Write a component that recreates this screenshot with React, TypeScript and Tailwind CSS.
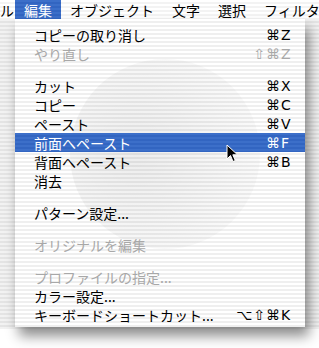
const font = "font-['Noto_Sans_CJK_JP','Noto_Sans',sans-serif]";
const keyFont = "font-['DejaVu_Sans','Liberation_Sans',sans-serif]";

type Item =
  | { kind: 'sep' }
  | { kind: 'item'; label: string; mods?: string; k?: string; disabled?: boolean; active?: boolean };

const items: Item[] = [
  { kind: 'item', label: 'コピーの取り消し', mods: '⌘', k: 'Z' },
  { kind: 'item', label: 'やり直し', mods: '⇧⌘', k: 'Z', disabled: true },
  { kind: 'sep' },
  { kind: 'item', label: 'カット', mods: '⌘', k: 'X' },
  { kind: 'item', label: 'コピー', mods: '⌘', k: 'C' },
  { kind: 'item', label: 'ペースト', mods: '⌘', k: 'V' },
  { kind: 'item', label: '前面へペースト', mods: '⌘', k: 'F', active: true },
  { kind: 'item', label: '背面へペースト', mods: '⌘', k: 'B' },
  { kind: 'item', label: '消去' },
  { kind: 'sep' },
  { kind: 'item', label: 'パターン設定...' },
  { kind: 'sep' },
  { kind: 'item', label: 'オリジナルを編集', disabled: true },
  { kind: 'sep' },
  { kind: 'item', label: 'プロファイルの指定...', disabled: true },
  { kind: 'item', label: 'カラー設定...' },
  { kind: 'item', label: 'キーボードショートカット...', mods: '⌥⇧⌘', k: 'K' },
];

function Row({ item }: { item: Extract<Item, { kind: 'item' }> }) {
  const color = item.active ? 'text-white' : item.disabled ? 'text-[#a8a8a8]' : 'text-black';
  return (
    <div
      className={`relative z-10 h-[19px] flex items-center justify-between pl-[19px] pr-[13px] ${color} ${
        item.active
          ? 'bg-[repeating-linear-gradient(to_bottom,#3c6fc9_0px,#3c6fc9_2px,#3265c1_2px,#3265c1_4px)]'
          : ''
      }`}
    >
      <span className="text-[14px] leading-none whitespace-nowrap">{item.label}</span>
      {item.k && (
        <span className={`flex items-center leading-none ${keyFont}`}>
          <span className="text-[14px] tracking-[1px]">{item.mods}</span>
          <span className="text-[14px] w-[11px]">{item.k}</span>
        </span>
      )}
    </div>
  );
}

function Cursor() {
  return (
    <svg className="absolute left-[226px] top-[144px] z-20" width="14" height="20" viewBox="0 0 14 20">
      <path d="M1 1 L1 15 L4.5 11.5 L7 17.5 L9.3 16.5 L6.8 10.8 L11.5 10.8 Z" fill="#000" stroke="#fff" strokeWidth="1" />
    </svg>
  );
}

export default function App() {
  const bar = ['編集', 'オブジェクト', '文字', '選択', 'フィルタ'];
  return (
    <div className={`relative w-[319px] h-[348px] overflow-hidden bg-white ${font}`}>
      {/* menu bar */}
      <div className="h-[19px] flex items-center bg-[repeating-linear-gradient(to_bottom,#ffffff_0px,#ffffff_2px,#f3f3f3_2px,#f3f3f3_4px)] text-[14px] leading-none text-black whitespace-nowrap">
        <div className="w-[15px] shrink-0 h-full flex items-center">
          <span>ル</span>
        </div>
        {bar.map((t, i) => (
          <div
            key={t}
            className={`shrink-0 h-full flex items-center px-[9px] ${
              i === 0
                ? 'text-white bg-[repeating-linear-gradient(to_bottom,#3c6fc9_0px,#3c6fc9_2px,#3265c1_2px,#3265c1_4px)]'
                : ''
            }`}
          >
            {t}
          </div>
        ))}
      </div>

      {/* window content behind */}
      <div className="h-[310px] bg-[repeating-linear-gradient(to_bottom,#f2f2f2_0px,#f2f2f2_2px,#e4e4e4_2px,#e4e4e4_4px)]" />

      {/* dropdown */}
      <div className="absolute left-[15px] top-[19px] w-[290px] pt-[6px] pb-[3px] overflow-hidden bg-[repeating-linear-gradient(to_bottom,#ffffff_0px,#ffffff_2px,#efefef_2px,#efefef_4px)] shadow-[4px_9px_12px_rgba(0,0,0,0.45)]">
        <div className="absolute left-[55px] top-[40px] w-[190px] h-[190px] rounded-full bg-[radial-gradient(circle_at_35%_50%,rgba(0,0,0,0.07),rgba(0,0,0,0.03)_60%,rgba(0,0,0,0.01)_100%)]" />
        {items.map((it, i) =>
          it.kind === 'sep' ? <div key={i} className="h-[13px]" /> : <Row key={i} item={it} />
        )}
      </div>

      <Cursor />
    </div>
  );
}
